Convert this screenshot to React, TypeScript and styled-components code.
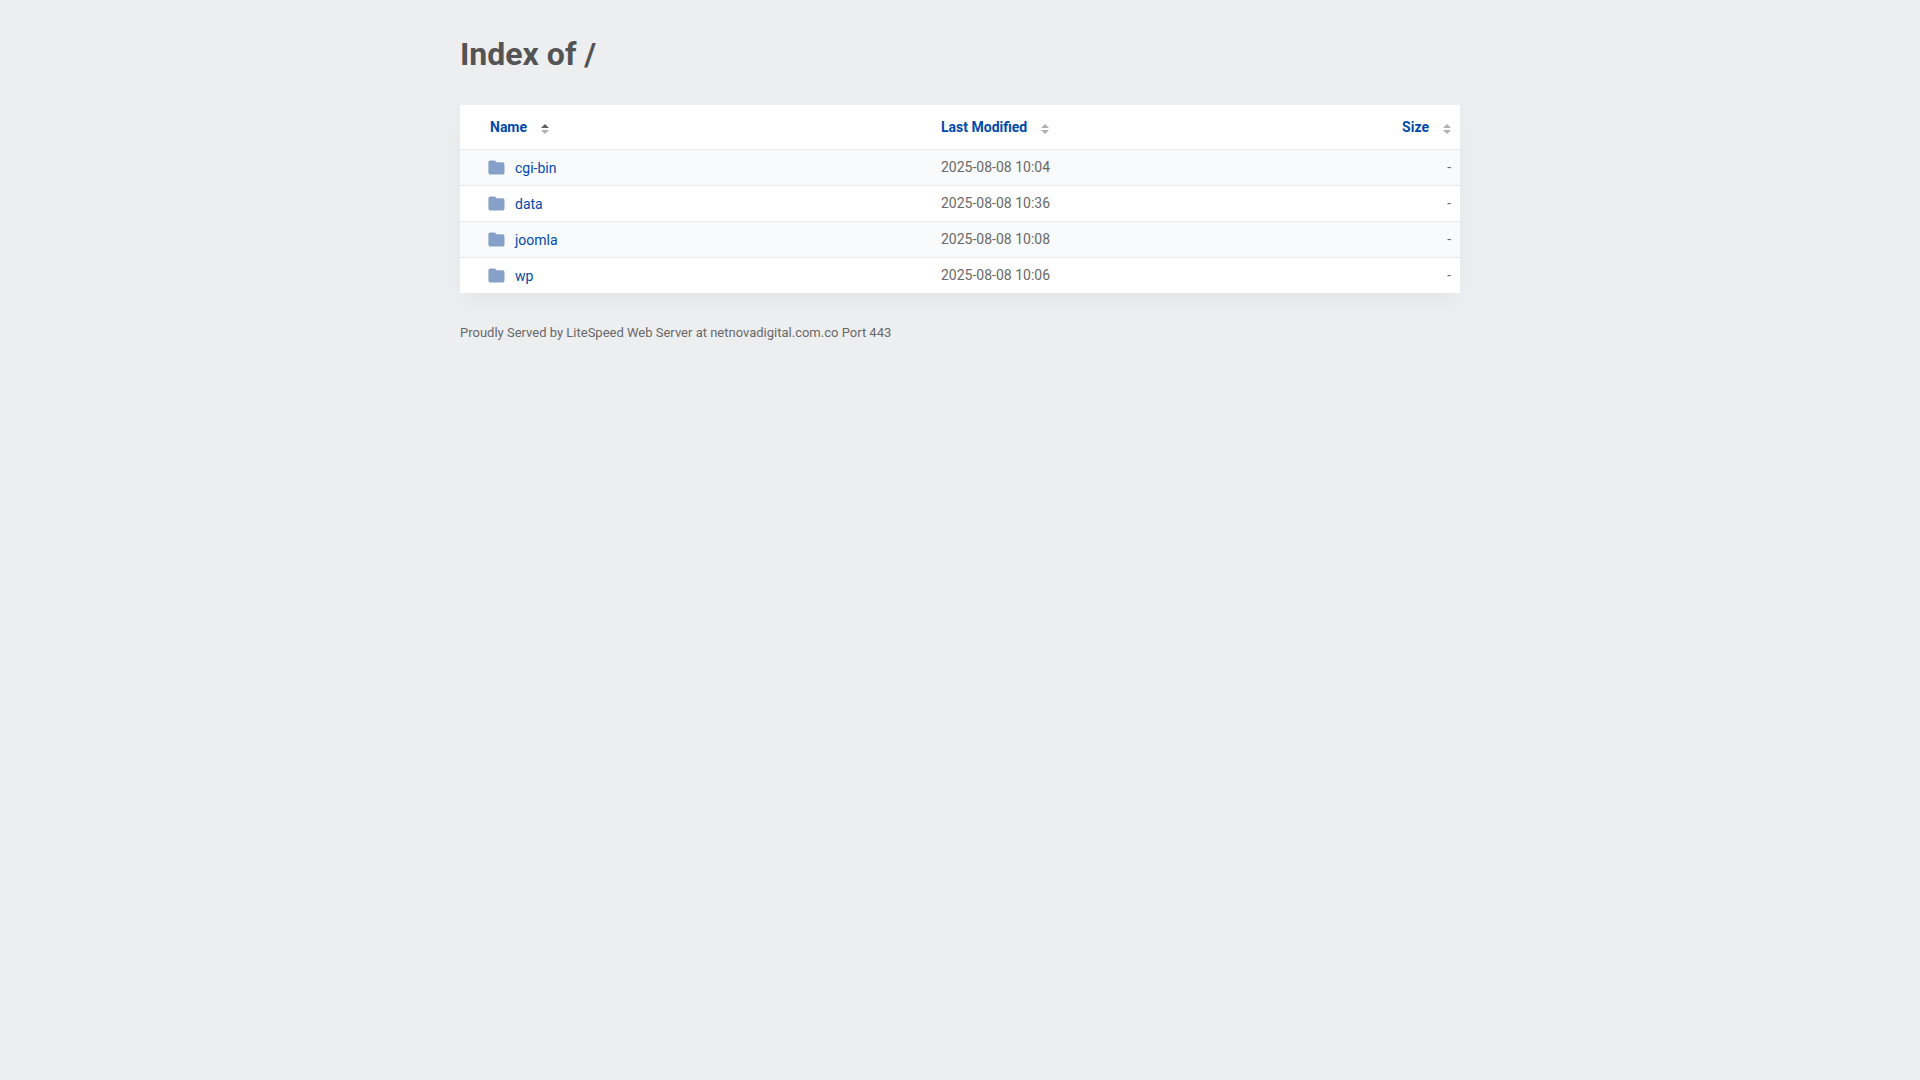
import React, { useState } from "react";
import styled, { createGlobalStyle } from "styled-components";

const GlobalStyle = createGlobalStyle`
  *, *::before, *::after {
    box-sizing: border-box;
  }
  body {
    margin: 0;
    background: #edeef0;
    color: #545454;
    font-family: Roboto, "Liberation Sans", sans-serif;
    font-size: 14px;
    line-height: 20px;
  }
`;

const Page = styled.div`
  max-width: 1032px;
  margin: 0 auto;
  padding: 32px 16px;
`;

const Title = styled.h1`
  margin: 0 0 29px;
  font-size: 32px;
  line-height: 44px;
  font-weight: 700;
  color: #545454;
`;

const Listing = styled.table`
  width: 100%;
  table-layout: fixed;
  border-collapse: separate;
  border-spacing: 0;
  background: #ffffff;
  box-shadow: 0 10px 20px -5px #dce3e6;
`;

const NameCol = styled.col`
  width: 47%;
`;

const DateCol = styled.col`
  width: 33%;
`;

const SizeCol = styled.col``;

const HeadCell = styled.th<{ $align?: "right"; $indent?: boolean }>`
  height: 44px;
  padding: 0 8px 0 ${(p) => (p.$indent ? 30 : 11)}px;
  text-align: ${(p) => p.$align ?? "left"};
  vertical-align: middle;
`;

const SortButton = styled.button`
  display: inline-flex;
  align-items: center;
  gap: 13px;
  padding: 0;
  border: 0;
  background: none;
  color: #024aab;
  font: inherit;
  font-weight: 700;
  vertical-align: top;
  cursor: pointer;
`;

const SortArrows = styled.svg`
  display: block;
  width: 10px;
  height: 10px;
  margin-top: 4px;
`;

const Row = styled.tr`
  &:nth-child(odd) {
    background: #f8fafc;
  }
`;

const Cell = styled.td<{ $align?: "right"; $indent?: boolean }>`
  height: 36px;
  padding: 0 9px 2px ${(p) => (p.$indent ? 28 : 11)}px;
  border-top: 1px solid #e8eaec;
  color: #696969;
  text-align: ${(p) => p.$align ?? "left"};
  vertical-align: middle;
`;

const EntryLink = styled.a`
  display: inline-flex;
  align-items: center;
  gap: 10px;
  padding-top: 2px;
  color: #024aab;
  text-decoration: none;
  vertical-align: top;

  &:hover {
    text-decoration: underline;
  }
`;

const Folder = styled.svg`
  display: block;
  width: 17px;
  height: 15px;
  fill: #86a1c7;
`;

const Footer = styled.address`
  margin-top: 30px;
  color: #696969;
  font-size: 13px;
  font-style: normal;
`;

type Key = "name" | "date" | "size";
type Entry = { name: string; date: string; size: string };

const entries: Entry[] = [
  { name: "cgi-bin", date: "2025-08-08 10:04", size: "-" },
  { name: "data", date: "2025-08-08 10:36", size: "-" },
  { name: "joomla", date: "2025-08-08 10:08", size: "-" },
  { name: "wp", date: "2025-08-08 10:06", size: "-" },
];

function FolderIcon() {
  return (
    <Folder viewBox="0 0 17 15" aria-hidden="true">
      <path d="M2.300.4h3.700c.7 0 1.200.2 1.600.7l.9 1.100h5.900c1.200 0 2.100.9 2.100 2.100v8.200c0 1.200-.9 2.100-2.100 2.100H2.500c-1.200 0-2.100-.9-2.100-2.100V2.300C.4 1.200 1.200.4 2.300.4z" />
    </Folder>
  );
}

function SortIcon({ up, down }: { up: boolean; down: boolean }) {
  return (
    <SortArrows viewBox="0 0 10 10" aria-hidden="true">
      <path d="M1 4 5 0l4 4z" fill={up ? "#5f5f5f" : "#b0b0b0"} />
      <path d="M1 6h8l-4 4z" fill={down ? "#5f5f5f" : "#b0b0b0"} />
    </SortArrows>
  );
}

export default function App() {
  const [sort, setSort] = useState<{ key: Key; asc: boolean }>({ key: "name", asc: true });

  const rows = [...entries].sort(
    (a, b) => a[sort.key].localeCompare(b[sort.key]) * (sort.asc ? 1 : -1)
  );

  const header = (key: Key, label: string) => (
    <SortButton
      type="button"
      onClick={() => setSort({ key, asc: sort.key === key ? !sort.asc : true })}
    >
      {label}
      <SortIcon up={sort.key === key && sort.asc} down={sort.key === key && !sort.asc} />
    </SortButton>
  );

  return (
    <>
      <GlobalStyle />
      <Page>
        <Title>Index of /</Title>
        <Listing>
          <colgroup>
            <NameCol />
            <DateCol />
            <SizeCol />
          </colgroup>
          <thead>
            <tr>
              <HeadCell $indent>{header("name", "Name")}</HeadCell>
              <HeadCell>{header("date", "Last Modified")}</HeadCell>
              <HeadCell $align="right">{header("size", "Size")}</HeadCell>
            </tr>
          </thead>
          <tbody>
            {rows.map((entry) => (
              <Row key={entry.name}>
                <Cell $indent>
                  <EntryLink href={`/${entry.name}/`}>
                    <FolderIcon />
                    {entry.name}
                  </EntryLink>
                </Cell>
                <Cell>{entry.date}</Cell>
                <Cell $align="right">{entry.size}</Cell>
              </Row>
            ))}
          </tbody>
        </Listing>
        <Footer>Proudly Served by LiteSpeed Web Server at netnovadigital.com.co Port 443</Footer>
      </Page>
    </>
  );
}
